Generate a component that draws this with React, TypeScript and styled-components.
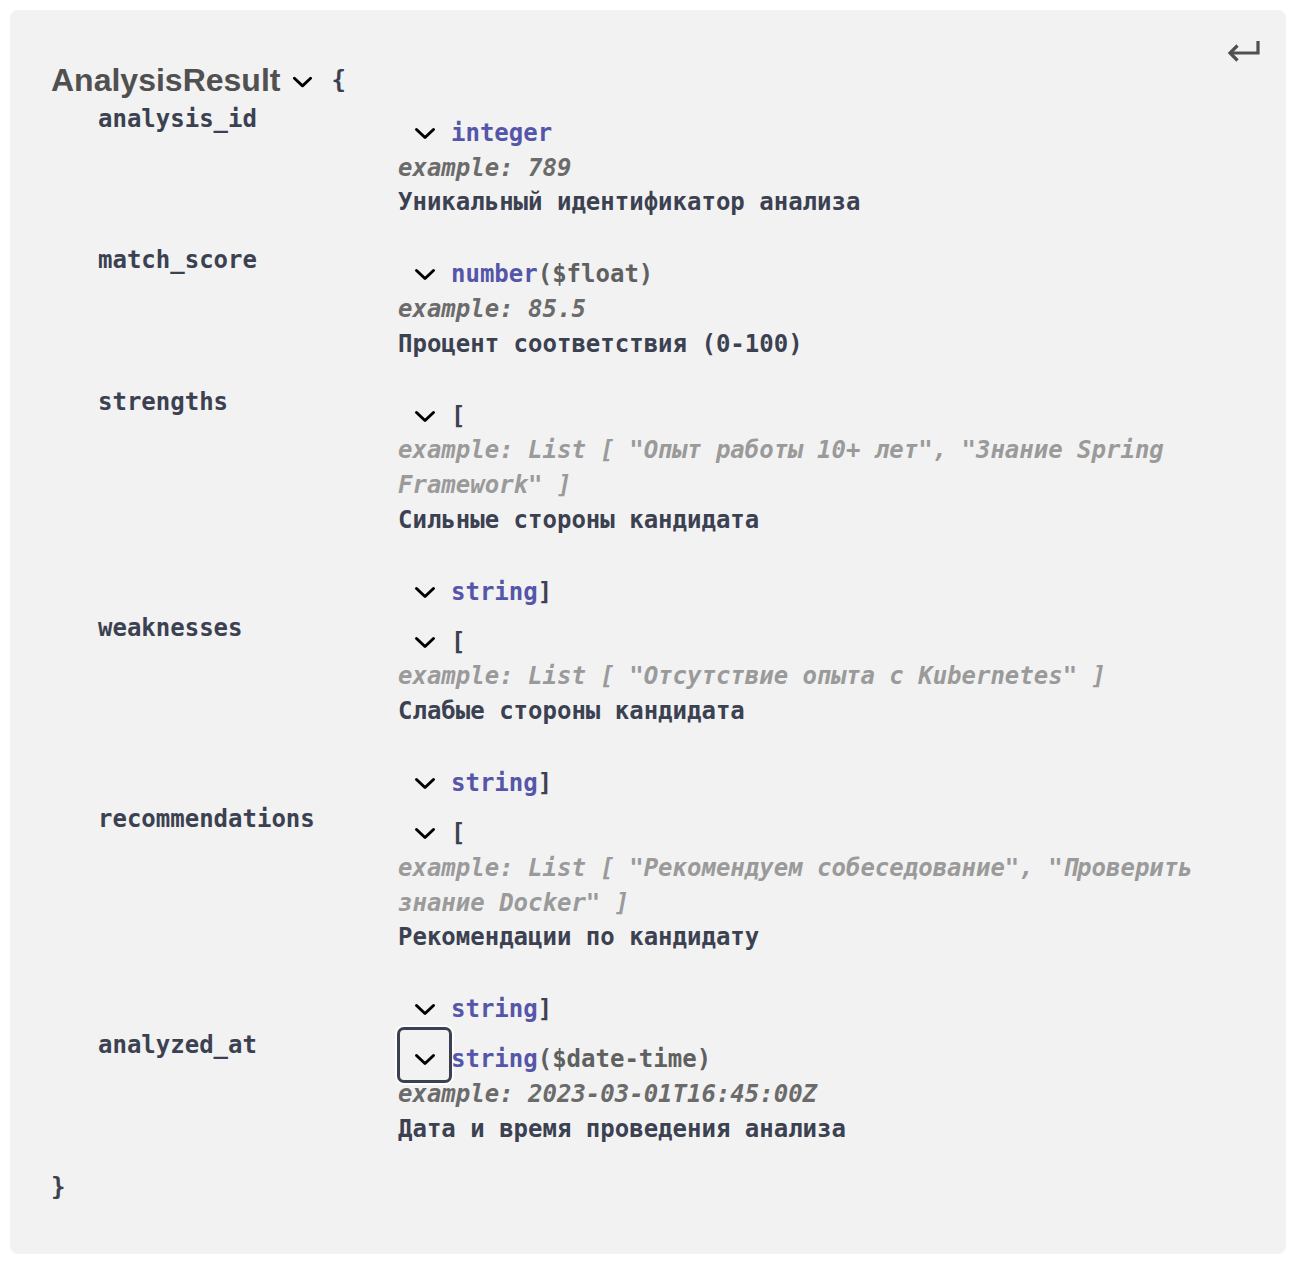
import React from 'react';
import styled, { createGlobalStyle } from 'styled-components';

// Типы данных
type PropRow = {
  name: string;
  type?: string;
  format?: string;
  array?: boolean;
  example: string;
  desc: string;
  focused?: boolean;
};

const rows: PropRow[] = [
  { name: 'analysis_id', type: 'integer', example: '789', desc: 'Уникальный идентификатор анализа' },
  { name: 'match_score', type: 'number', format: '($float)', example: '85.5', desc: 'Процент соответствия (0-100)' },
  {
    name: 'strengths',
    array: true,
    example: 'List [ "Опыт работы 10+ лет", "Знание Spring Framework" ]',
    desc: 'Сильные стороны кандидата'
  },
  {
    name: 'weaknesses',
    array: true,
    example: 'List [ "Отсутствие опыта с Kubernetes" ]',
    desc: 'Слабые стороны кандидата'
  },
  {
    name: 'recommendations',
    array: true,
    example: 'List [ "Рекомендуем собеседование", "Проверить знание Docker" ]',
    desc: 'Рекомендации по кандидату'
  },
  {
    name: 'analyzed_at',
    type: 'string',
    format: '($date-time)',
    example: '2023-03-01T16:45:00Z',
    desc: 'Дата и время проведения анализа',
    focused: true
  }
];

const LINE = '34.7px';

const GlobalStyle = createGlobalStyle`
  html, body {
    margin: 0;
    padding: 0;
    background: #ffffff;
  }
  body {
    font-family: "DejaVu Sans Mono", "Liberation Mono", monospace;
  }
`;

const Page = styled.div`
  padding: 10px 28px 16px 10px;
`;

const ModelBox = styled.div`
  position: relative;
  background: #f2f2f2;
  border-radius: 8px;
  padding: 48px 41px 49px;
  font-size: 24px;
  font-weight: bold;
  color: #3b4151;
`;

const BackButton = styled.div`
  position: absolute;
  top: 28px;
  right: 23px;
  width: 36px;
  height: 26px;
  color: #505050;
`;

const TitleRow = styled.div`
  display: flex;
  align-items: center;
  height: 44px;
`;

const Title = styled.span`
  font-family: "Liberation Sans", Arial, sans-serif;
  font-size: 32px;
  font-weight: bold;
  color: #505050;
`;

const TitleToggle = styled.span`
  display: flex;
  margin: 4px 18px 0 12px;
`;

const Brace = styled.span`
  line-height: ${LINE};
  color: #3b4151;
`;

const PropTable = styled.div`
  display: flex;
  flex-direction: column;
  padding-left: 47px;
`;

const Row = styled.div`
  display: grid;
  grid-template-columns: 300px 1fr;
`;

const PropName = styled.div`
  line-height: ${LINE};
`;

const PropValue = styled.div`
  display: flex;
  flex-direction: column;
`;

const TypeLine = styled.div<{ $closing?: boolean }>`
  display: flex;
  align-items: flex-end;
  height: 48.5px;
  margin-bottom: ${p => (p.$closing ? '1.5px' : '0')};
`;

const Toggle = styled.span<{ $focused?: boolean }>`
  box-sizing: border-box;
  align-self: flex-start;
  display: flex;
  align-items: center;
  justify-content: center;
  width: 55px;
  height: 56px;
  margin: -1px -1px 0 -1px;
  padding-top: 10px;
  border: 3px solid ${p => (p.$focused ? '#3b4151' : 'transparent')};
  border-radius: 7px;
  box-shadow: ${p => (p.$focused ? '0 0 0 2px #ffffff' : 'none')};
`;

const TypeText = styled.span`
  line-height: ${LINE};
  white-space: nowrap;
`;

const PropType = styled.span`
  color: #55a;
`;

const PropFormat = styled.span`
  color: #606060;
`;

const Example = styled.div<{ $muted?: boolean }>`
  line-height: ${LINE};
  font-style: italic;
  color: ${p => (p.$muted ? '#9a9a9a' : '#6b6b6b')};
`;

const Description = styled.div`
  line-height: ${LINE};
  margin-bottom: 23.5px;
`;

const Chevron = ({ size = 22 }: { size?: number }) => (
  <svg width={size} height={size} viewBox="0 0 22 22" fill="none">
    <path d="M2.5 6.5 L11 14.5 L19.5 6.5" stroke="#000" strokeWidth="3" strokeLinecap="round" strokeLinejoin="round" />
  </svg>
);

const ReturnIcon = () => (
  <svg width="36" height="26" viewBox="0 0 36 26" fill="none">
    <path d="M31 3 V15 H4" stroke="currentColor" strokeWidth="3.2" />
    <path d="M10.5 7.5 L3 15 L10.5 22.5" stroke="currentColor" strokeWidth="3.2" />
  </svg>
);

const TypeHeader = ({
  focused,
  closing,
  children
}: {
  focused?: boolean;
  closing?: boolean;
  children: React.ReactNode;
}) => (
  <TypeLine $closing={closing}>
    <Toggle $focused={focused}>
      <Chevron />
    </Toggle>
    <TypeText>{children}</TypeText>
  </TypeLine>
);

export default function App() {
  return (
    <Page>
      <GlobalStyle />
      <ModelBox>
        <BackButton>
          <ReturnIcon />
        </BackButton>

        <TitleRow>
          <Title>AnalysisResult</Title>
          <TitleToggle>
            <Chevron size={21} />
          </TitleToggle>
          <Brace>{'{'}</Brace>
        </TitleRow>

        <PropTable>
          {rows.map(row => (
            <Row key={row.name}>
              <PropName>{row.name}</PropName>
              <PropValue>
                {row.array ? (
                  <TypeHeader>[</TypeHeader>
                ) : (
                  <TypeHeader focused={row.focused}>
                    <PropType>{row.type}</PropType>
                    {row.format && <PropFormat>{row.format}</PropFormat>}
                  </TypeHeader>
                )}
                <Example $muted={row.array}>example: {row.example}</Example>
                <Description>{row.desc}</Description>
                {row.array && (
                  <TypeHeader closing>
                    <PropType>string</PropType>]
                  </TypeHeader>
                )}
              </PropValue>
            </Row>
          ))}
        </PropTable>

        <Brace>{'}'}</Brace>
      </ModelBox>
    </Page>
  );
}
